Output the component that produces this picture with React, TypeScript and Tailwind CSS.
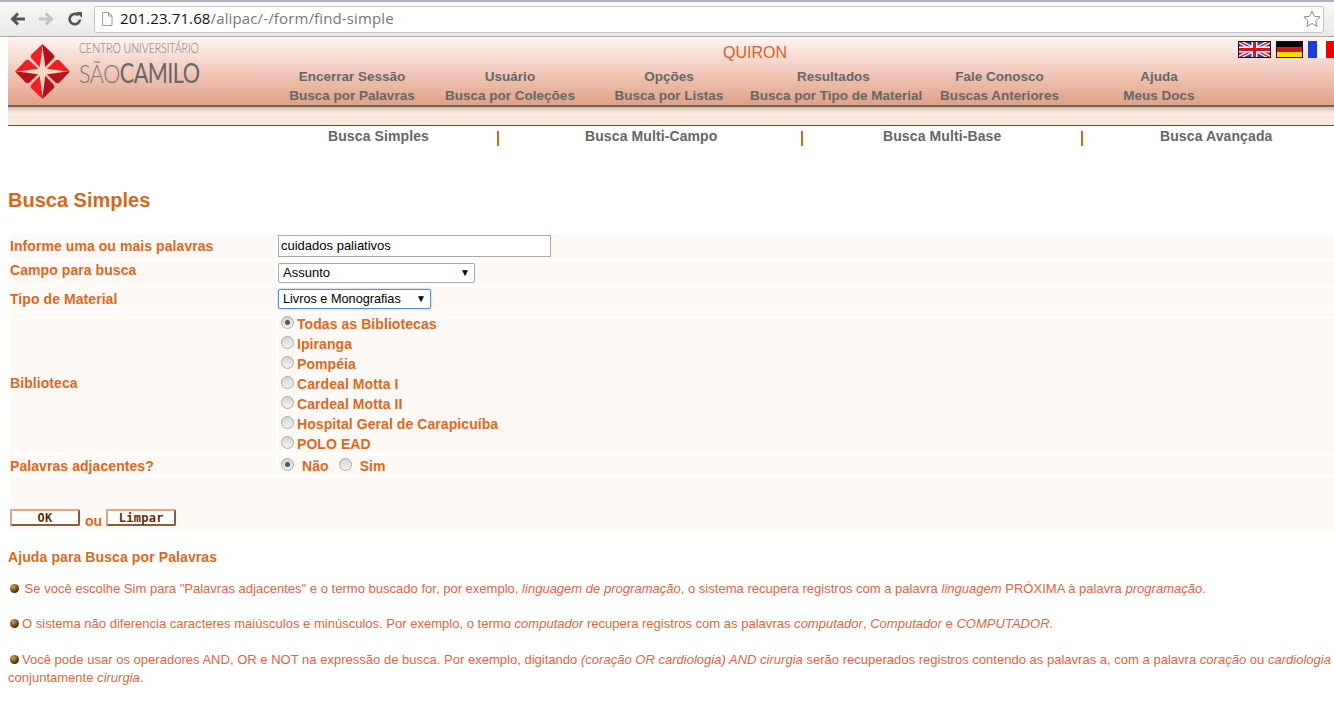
import React from "react";

const Ar = "font-['Liberation_Sans',Arial,sans-serif]";

function Petal({ rot, left, right }: { rot: number; left: string; right: string }) {
  return (
    <g transform={`rotate(${rot} 27.5 27.5)`}>
      <path d="M27.5 0 L16.5 10.5 Q15 12.500 16.5 14.500 L27.5 26 Z" fill={left} />
      <path d="M27.5 0 L38.500 10.500 Q40 12.500 38.500 14.500 L27.5 26 Z" fill={right} />
    </g>
  );
}

function Logo() {
  const b = "#ee2024";
  const d = "#b3141a";
  return (
    <div className="flex items-start pl-[7px] pt-[7px] w-[270px]">
      <svg width="55" height="55" viewBox="0 0 55 55" className="shrink-0">
        <Petal rot={0} left={b} right={d} />
        <Petal rot={90} left={b} right={d} />
        <Petal rot={180} left={d} right={b} />
        <Petal rot={270} left={d} right={b} />
        <path d="M27.5 3 L30.500 24.500 L52 27.500 L30.500 30.500 L27.500 52 L24.500 30.500 L3 27.500 L24.500 24.500 Z" fill="#f9d8c8" />
      </svg>
      <div className="ml-[9px] -mt-[4px] font-['Lato',sans-serif] text-[#7b7674]">
        <div className="text-[13px] leading-[16px] tracking-[-0.05px] whitespace-nowrap font-light origin-left scale-x-[0.81]">CENTRO UNIVERSITÁRIO</div>
        <div className="text-[26px] leading-[32px] tracking-[-0.6px] whitespace-nowrap font-light mt-[1px] origin-left scale-x-[0.83]">
          SÃO<span className="font-normal text-[#666]">CAMILO</span>
        </div>
      </div>
    </div>
  );
}

const menu: [string, string, string][] = [
  ["Encerrar Sessão", "Busca por Palavras", "w-[160px]"],
  ["Usuário", "Busca por Coleções", "w-[156px]"],
  ["Opções", "Busca por Listas", "w-[162px]"],
  ["Resultados", "Busca por Tipo de Material", "w-[167px]"],
  ["Fale Conosco", "Buscas Anteriores", "w-[165px]"],
  ["Ajuda", "Meus Docs", "w-[154px]"],
];

function Radio({ checked }: { checked?: boolean }) {
  return (
    <span className="inline-flex w-[13px] h-[13px] rounded-full border border-[#a8a8a8] bg-gradient-to-b from-[#d4d4d4] to-[#f4f4f4] items-center justify-center shrink-0">
      {checked && <span className="w-[5px] h-[5px] rounded-full bg-[#555]" />}
    </span>
  );
}

function Bullet({ gap }: { gap: string }) {
  return <span className={`inline-block ml-[2px] ${gap} w-[9px] h-[9px] rounded-full bg-[radial-gradient(circle_at_35%_30%,#c9a36a,#5a3208_65%,#2e1a04)]`} />;
}

function Sel({ label, w, focus, size }: { label: string; w: string; focus?: boolean; size: string }) {
  return (
    <div className={`${w} ${size} h-[20px] bg-white flex items-center justify-between rounded-[2px] pl-[4px] pr-[4px] text-black border ${focus ? "border-[#5b8fd8] shadow-[0_0_2px_#7aa7e8]" : "border-[#a9a9a9]"}`}>
      <span>{label}</span>
      <span className="text-[10px] leading-none">▼</span>
    </div>
  );
}

function Btn({ label }: { label: string }) {
  return (
    <div className="w-[70px] h-[17px] rounded-[2px] border-2 border-t-[#d9a58c] border-l-[#d9a58c] border-r-[#8f5a3c] border-b-[#8f5a3c] bg-[#fffdfb] flex items-center justify-center font-['DejaVu_Sans_Mono',monospace] font-bold text-[12px] tracking-[0.3px] text-[#5e2c00]">
      {label}
    </div>
  );
}

const libs = ["Todas as Bibliotecas", "Ipiranga", "Pompéia", "Cardeal Motta I", "Cardeal Motta II", "Hospital Geral de Carapicuíba", "POLO EAD"];

export default function App() {
  return (
    <div className={`${Ar} w-[1334px] h-[701px] overflow-hidden bg-white relative`}>
      {/* browser bar */}
      <div className="h-[37px] border-b border-[#a9a9a9] bg-gradient-to-b from-[#f8f8f8] to-[#e9e9e9] flex items-center pl-[9px] pr-[10px] border-t-2 border-t-[#b0b4b8]">
        <svg width="17" height="16" viewBox="0 0 17 16" className="shrink-0"><path d="M16 8H4M9 2.500 3.500 8 9 13.500" fill="none" stroke="#555" strokeWidth="3" /></svg>
        <svg width="17" height="16" viewBox="0 0 17 16" className="ml-[12px] shrink-0"><path d="M1 8h12M8 2.500 13.500 8 8 13.500" fill="none" stroke="#c4c4c4" strokeWidth="3" /></svg>
        <svg width="16" height="16" viewBox="0 0 16 16" className="ml-[12px] shrink-0"><path d="M13 8.500A5.200 5.200 0 1 1 11.300 4.200" fill="none" stroke="#555" strokeWidth="2.600" /><path d="M9 1 15 1 15 7Z" fill="#555" /></svg>
        <div className="ml-[11px] flex-1 h-[27px] bg-white border border-[#c4c4c4] rounded-[3px] flex items-center pl-[6px] pr-[1px]">
          <svg width="12" height="14" viewBox="0 0 12 14" className="shrink-0"><path d="M1.500.5h6l3.500 3.500v9.500h-9.500z" fill="#fff" stroke="#9a9a9a" /><path d="M7.500.5V4H11" fill="none" stroke="#9a9a9a" /></svg>
          <span className="ml-[7px] text-[15px] font-['Open_Sans',sans-serif] text-[#777] tracking-[0.13px] -mt-[1px]"><span className="text-[#111]">201.23.71.68</span>/alipac/-/form/find-simple</span>
          <svg width="20" height="20" viewBox="0 0 20 20" className="ml-auto shrink-0"><path d="M10 2l2.400 5.300 5.700.6-4.300 3.800 1.300 5.700L10 14.500l-5.100 2.900 1.300-5.700L1.900 7.900l5.700-.6z" fill="#fff" stroke="#8a8a8a" /></svg>
        </div>
      </div>

      <div className="pl-[8px]">
        {/* header */}
        <div className="relative h-[68px] bg-gradient-to-b from-[#fff5f0] to-[#e0a088] flex">
          <Logo />
          <div className="flex-1">
            <div className="text-center text-[16px] text-[#d4622a] leading-[17px] pt-[7px] w-[954px]">QUIRON</div>
            <div className="flex mt-[6px] -ml-[6px]">
              {menu.map(([a, b, w]) => (
                <div key={a} className={`${w} text-center font-bold text-[13.500px] leading-[19px] text-[#666] whitespace-nowrap`}>
                  <div>{a}</div>
                  <div>{b}</div>
                </div>
              ))}
            </div>
          </div>
          <div className="absolute left-[1230px] top-[4px] flex gap-[5px]">
            <svg width="33" height="17" viewBox="0 0 33 17" className="shrink-0">
              <rect width="33" height="17" fill="#2b3f9c" />
              <path d="M0 0 33 17M33 0 0 17" stroke="#fff" strokeWidth="4" />
              <path d="M0 0 33 17M33 0 0 17" stroke="#d8141c" strokeWidth="1.500" />
              <path d="M16.500 0V17M0 8.500H33" stroke="#fff" strokeWidth="6" />
              <path d="M16.500 0V17M0 8.500H33" stroke="#d8141c" strokeWidth="3" />
              <rect x=".5" y=".5" width="32" height="16" fill="none" stroke="#111" />
            </svg>
            <svg width="27" height="17" viewBox="0 0 27 17" className="shrink-0">
              <rect width="27" height="6" fill="#000" />
              <rect y="6" width="27" height="5" fill="#d8141c" />
              <rect y="11" width="27" height="6" fill="#ffdc00" />
              <rect x=".5" y=".5" width="26" height="16" fill="none" stroke="#111" />
            </svg>
            <svg width="27" height="17" viewBox="0 0 27 17" className="shrink-0">
              <rect width="9" height="17" fill="#1a3ce0" />
              <rect x="9" width="9" height="17" fill="#fff" />
              <rect x="18" width="9" height="17" fill="#f00000" />
            </svg>
          </div>
        </div>
        <div className="h-[21px] border-t-2 border-t-[#686460] border-b border-b-[#55504c] bg-[linear-gradient(#cdbca6,#fbeadc_6px,#fbeadc)]" />

        {/* tabs */}
        <div className="flex h-[22px] items-center font-bold text-[14px] leading-[16px] tracking-[0.1px] text-[#666] pb-[2px]">
          <div className="w-[320px]" />
          <span className="w-[101px] whitespace-nowrap">Busca Simples</span>
          <span className="ml-[68px] w-[2px] h-[15px] bg-[#d2691e] mt-[5px]" />
          <span className="ml-[86px] w-[133px] whitespace-nowrap">Busca Multi-Campo</span>
          <span className="ml-[83px] w-[2px] h-[15px] bg-[#d2691e] mt-[5px]" />
          <span className="ml-[80px] w-[120px] whitespace-nowrap">Busca Multi-Base</span>
          <span className="ml-[78px] w-[2px] h-[15px] bg-[#d2691e] mt-[5px]" />
          <span className="ml-[77px] whitespace-nowrap">Busca Avançada</span>
        </div>

        <h1 className="text-[20px] leading-[22px] font-bold text-[#d2691e] mt-[41px]">Busca Simples</h1>

        {/* form */}
        <div className="mt-[23px] ml-[2px] flex flex-col gap-[2px] font-bold text-[14px] leading-[16px] tracking-[0.07px] text-[#d9691e]">
          <div className="flex gap-[2px] h-[25px]">
            <div className="w-[266px] bg-[#fff9f6] flex items-center pb-[1px]">Informe uma ou mais palavras</div>
            <div className="flex-1 bg-[#fff9f6] flex items-center">
              <div className="w-[273px] h-[22px] -mt-[1px] bg-white border border-[#a9a9a9] pl-[2px] font-normal tracking-normal text-[13px] text-black flex items-center">cuidados paliativos</div>
            </div>
          </div>
          <div className="flex gap-[2px] h-[24px]">
            <div className="w-[266px] bg-[#fff9f6] flex items-start pt-[1px]">Campo para busca</div>
            <div className="flex-1 bg-[#fff9f6] flex items-center font-normal tracking-normal">
              <Sel label="Assunto" w="w-[197px]" size="text-[13px]" />
            </div>
          </div>
          <div className="flex gap-[2px] h-[24px]">
            <div className="w-[266px] bg-[#fff9f6] flex items-center">Tipo de Material</div>
            <div className="flex-1 bg-[#fff9f6] flex items-center font-normal tracking-normal">
              <Sel label="Livros e Monografias" w="w-[153px]" size="text-[12.700px]" focus />
            </div>
          </div>
          <div className="flex gap-[2px] h-[140px]">
            <div className="w-[266px] bg-[#fff9f6] flex items-center">Biblioteca</div>
            <div className="flex-1 bg-[#fff9f6] pl-[3px] flex flex-col">
              {libs.map((l, i) => (
                <div key={l} className="h-[20px] shrink-0 flex items-center gap-[3px] pt-[2px]">
                  <span className="-mt-[3px] flex"><Radio checked={i === 0} /></span>
                  <span>{l}</span>
                </div>
              ))}
            </div>
          </div>
          <div className="flex gap-[2px] h-[20px]">
            <div className="w-[266px] bg-[#fff9f6] flex items-center pt-[2px]">Palavras adjacentes?</div>
            <div className="flex-1 bg-[#fff9f6] pl-[3px] pt-[2px] flex items-center">
              <span className="-mt-[3px] flex"><Radio checked /></span>
              <span className="ml-[8px]">Não</span>
              <span className="ml-[10px] -mt-[3px] flex"><Radio /></span>
              <span className="ml-[8px]">Sim</span>
            </div>
          </div>
          <div className="h-[53px] bg-[#fff9f6] flex items-end pb-[4px]">
            <Btn label="OK" />
            <span className="ml-[5px] mr-[4px] -mb-[3px]">ou</span>
            <Btn label="Limpar" />
          </div>
        </div>

        <h2 className="font-bold text-[14px] leading-[16px] tracking-[0.1px] text-[#d9691e] mt-[19px]">Ajuda para Busca por Palavras</h2>

        <div className="text-[13.040px] leading-[18px] text-[#e0653f] pr-[1px]">
          <p className="mt-[15px] whitespace-nowrap"><Bullet gap="mr-[2px]" /> Se você escolhe Sim para "Palavras adjacentes" e o termo buscado for, por exemplo, <i>linguagem de programação</i>, o sistema recupera registros com a palavra <i>linguagem</i> PRÓXIMA à palavra <i>programação</i>.</p>
          <p className="mt-[17px] whitespace-nowrap"><Bullet gap="mr-[3px]" />O sistema não diferencia caracteres maiúsculos e minúsculos. Por exemplo, o termo <i>computador</i> recupera registros com as palavras <i>computador</i>, <i>Computador</i> e <i>COMPUTADOR</i>.</p>
          <p className="mt-[18px]"><Bullet gap="mr-[3px]" />Você pode usar os operadores AND, OR e NOT na expressão de busca. Por exemplo, digitando <i>(coração OR cardiologia) AND cirurgia</i> serão recuperados registros contendo as palavras a, com a palavra <i>coração</i> ou <i>cardiologia</i> conjuntamente <i>cirurgia</i>.</p>
        </div>
      </div>
    </div>
  );
}
